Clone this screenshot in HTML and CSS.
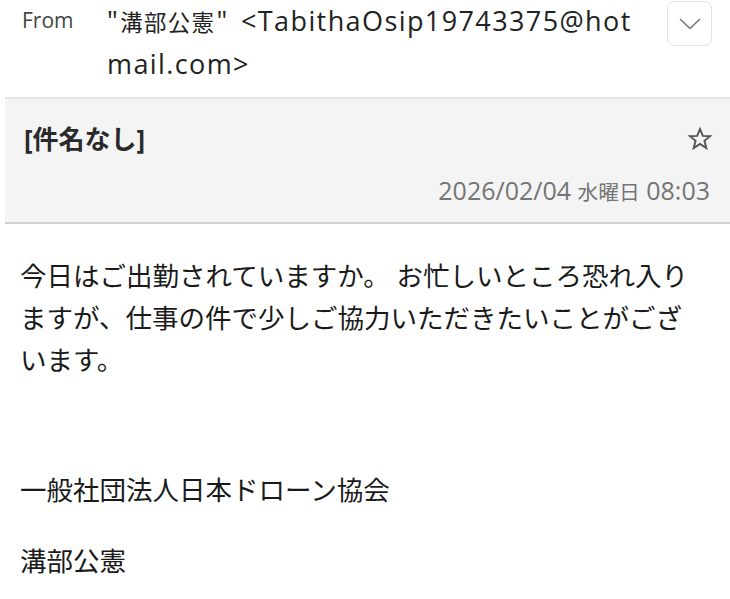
FILE: index.html
```html
<!DOCTYPE html>
<html lang="ja">
<head>
    <meta charset="UTF-8">
    <meta name="viewport" content="width=device-width, initial-scale=1.0">
    <title>メール</title>
    <link rel="stylesheet" href="styles.css">
</head>
<body>
    <!-- 差出人 -->
    <div class="from-row">
        <span class="from-label">From</span>
        <div class="from-address"><span>"</span><span class="cjk name">溝部公憲</span><span>" &lt;TabithaOsip19743375@hotmail.com&gt;</span></div>
        <button class="expand-btn" aria-label="詳細">
            <svg width="22" height="12" viewBox="0 0 22 12">
                <path d="M1.5 1.5 L11 10.5 L20.5 1.5" fill="none" stroke="#777" stroke-width="1.6" stroke-linecap="round" stroke-linejoin="round"/>
            </svg>
        </button>
    </div>

    <!-- 件名と日付 -->
    <div class="subject-box">
        <div class="subject-row">
            <span class="subject">[件名なし]</span>
            <svg class="star" width="26" height="26" viewBox="0 0 24 24">
                <path d="M12 2.8 L14.6 9.1 L21.3 9.4 L16.1 13.7 L17.8 20.3 L12 16.6 L6.2 20.3 L7.9 13.7 L2.7 9.4 L9.4 9.1 Z" fill="none" stroke="#555" stroke-width="1.8" stroke-linejoin="miter"/>
            </svg>
        </div>
        <div class="date"><span>2026/02/04 </span><span class="cjk">水曜日</span><span> 08:03</span></div>
    </div>

    <!-- 本文 -->
    <div class="mail-body">
        <p class="text">今日はご出勤されていますか。 お忙しいところ恐れ入りますが、仕事の件で少しご協力いただきたいことがございます。</p>
        <p class="sign org">一般社団法人日本ドローン協会</p>
        <p class="sign">溝部公憲</p>
    </div>
</body>
</html>
```

FILE: styles.css
```css
/* Основные стили */
body {
    margin: 0;
    width: 730px;
    font-family: "Open Sans", "Noto Sans CJK JP", sans-serif;
    color: #1a1a1a;
    background-color: #fff;
}
/* 日本語は英数字より小さめに表示される */
.cjk {
    font-size: 0.83em;
}

/* From */
.from-row {
    display: flex;
    align-items: flex-start;
    height: 97px;
    padding: 0 18px 0 22px;
    box-sizing: border-box;
}
.from-label {
    width: 85px;
    flex-shrink: 0;
    font-size: 21px;
    line-height: 40px;
    color: #444;
}
.from-address {
    flex: 1;
    font-size: 27px;
    line-height: 41px;
    letter-spacing: 1.4px;
    word-spacing: 4px;
    color: #222;
    overflow-wrap: anywhere;
    word-break: break-all;
    padding-right: 20px;
}
.from-address .name {
    margin: 0 1px;
}
.expand-btn {
    flex-shrink: 0;
    width: 45px;
    height: 45px;
    margin-top: 1px;
    padding: 0;
    border: 1.5px solid #e2e2e2;
    border-radius: 7px;
    background: #fff;
    display: flex;
    align-items: center;
    justify-content: center;
}

/* 件名 */
.subject-box {
    margin-left: 5px;
    background-color: #f4f4f4;
    border-top: 2px solid #e4e4e4;
    border-bottom: 2px solid #d2d2d2;
    padding: 0 20px 0 19px;
    height: 127px;
    box-sizing: border-box;
}
.subject-row {
    display: flex;
    justify-content: space-between;
    align-items: center;
    height: 66px;
    padding-top: 14px;
    box-sizing: border-box;
}
.subject {
    font-size: 26px;
    font-weight: bold;
    color: #2a2a2a;
    margin-top: -3px;
}
.star {
    margin-right: -3px;
}
.date {
    text-align: right;
    font-size: 25px;
    line-height: 32px;
    color: #757575;
    margin-top: 9px;
    white-space: pre;
}

/* 本文 */
.mail-body {
    padding: 31px 29px 0 20px;
}
.mail-body p {
    margin: 0;
    font-size: 26.5px;
    line-height: 42px;
}
.mail-body .sign.org {
    margin-top: 88px;
}
.mail-body .sign {
    margin-top: 29px;
}
```
